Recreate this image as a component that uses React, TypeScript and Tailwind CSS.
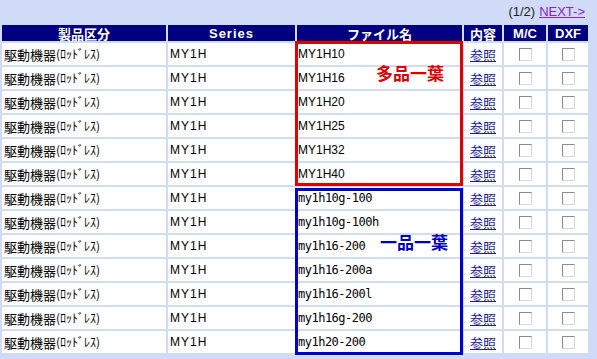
import React from 'react';

const rows = [
  { file: 'MY1H10', mono: false },
  { file: 'MY1H16', mono: false },
  { file: 'MY1H20', mono: false },
  { file: 'MY1H25', mono: false },
  { file: 'MY1H32', mono: false },
  { file: 'MY1H40', mono: false },
  { file: 'my1h10g-100', mono: true },
  { file: 'my1h10g-100h', mono: true },
  { file: 'my1h16-200', mono: true },
  { file: 'my1h16-200a', mono: true },
  { file: 'my1h16-200l', mono: true },
  { file: 'my1h16g-200', mono: true },
  { file: 'my1h20-200', mono: true },
];

const jp = "font-['Noto_Sans_CJK_JP',sans-serif]";

function Box() {
  return (
    <span className="block w-[13px] h-[13px] bg-white border border-t-[#8a8a8a] border-l-[#8a8a8a] border-r-[#d8d8d8] border-b-[#d8d8d8]" />
  );
}

export default function App() {
  return (
    <div className="w-[597px] h-[359px] overflow-hidden bg-[#d0dbf7] font-['Liberation_Sans','Noto_Sans_CJK_JP',sans-serif]">
      <div className="h-[23px] flex items-center justify-end pr-[12px] text-[13px] leading-none text-[#222]">
        <span className="mr-[4px]">(1/2)</span>
        <a className="text-[#8a22c8] underline">NEXT-&gt;</a>
      </div>

      <div className="relative">
        <div className="grid grid-cols-[164px_127px_165px_38px_42px_40px] gap-[2px] p-[2px]">
          <div className={`h-[16px] bg-[#000080] text-white text-[13px] font-bold flex items-center justify-center leading-none ${jp}`}>製品区分</div>
          <div className="h-[16px] bg-[#000080] text-white text-[13px] font-bold flex items-center justify-center leading-none tracking-[1px]">Series</div>
          <div className={`h-[16px] bg-[#000080] text-white text-[13px] font-bold flex items-center justify-center leading-none ${jp}`}>ファイル名</div>
          <div className={`h-[16px] bg-[#000080] text-white text-[13px] font-bold flex items-center justify-center leading-none ${jp}`}>内容</div>
          <div className="h-[16px] bg-[#000080] text-white text-[13px] font-bold flex items-center justify-center leading-none">M/C</div>
          <div className="h-[16px] bg-[#000080] text-white text-[13px] font-bold flex items-center justify-center leading-none">DXF</div>

          {rows.map((r) => (
            <React.Fragment key={r.file}>
              <div className={`h-[22px] bg-white flex items-center pl-[2px] text-[13px] leading-none text-black ${jp}`}>
                駆動機器<span className="text-[12px]">(ﾛｯﾄﾞﾚｽ)</span>
              </div>
              <div className="h-[22px] bg-white flex items-center pl-[2px] text-[12px] leading-none text-black tracking-[1px]">MY1H</div>
              <div
                className={
                  r.mono
                    ? "h-[22px] bg-white flex items-center pl-[1px] text-[12px] tracking-[-0.5px] leading-none text-black font-['DejaVu_Sans_Mono',monospace]"
                    : 'h-[22px] bg-white flex items-center pl-[1px] text-[12px] leading-none text-black'
                }
              >
                {r.file}
              </div>
              <div className={`h-[22px] bg-white flex items-center justify-center text-[13px] leading-none ${jp}`}>
                <a className="text-[#1c1ca8] underline">参照</a>
              </div>
              <div className="h-[22px] bg-white flex items-center justify-center">
                <Box />
              </div>
              <div className="h-[22px] bg-white flex items-center justify-center">
                <Box />
              </div>
            </React.Fragment>
          ))}
        </div>

        {/* annotation boxes over the file name column */}
        <div className="absolute left-[295px] top-[18px] w-[168px] h-[145px] border-[3px] border-[#e00000]" />
        <div className={`absolute left-[376px] top-[41px] text-[17px] font-bold leading-none text-[#e00000] ${jp}`}>多品一葉</div>
        <div className="absolute left-[295px] top-[165px] w-[168px] h-[167px] border-[3px] border-[#0000d0]" />
        <div className={`absolute left-[380px] top-[210px] text-[17px] font-bold leading-none text-[#0000c0] ${jp}`}>一品一葉</div>
      </div>
    </div>
  );
}
